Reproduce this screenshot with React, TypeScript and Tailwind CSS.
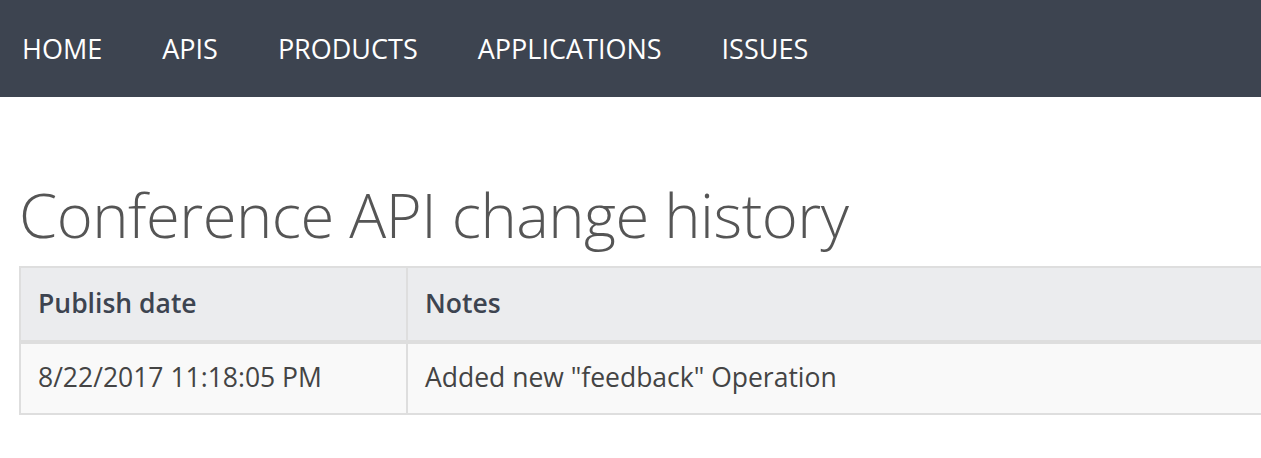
import React from "react";

export default function App() {
  const nav = ["HOME", "APIS", "PRODUCTS", "APPLICATIONS", "ISSUES"];
  return (
    <div className="min-h-[458px] w-[1261px] overflow-hidden bg-white" style={{ fontFamily: '"Open Sans", "Noto Sans", sans-serif' }}>
      <nav className="flex h-[97px] items-center bg-[#3d4450] pl-[22px]">
        <ul className="flex gap-[60px]">
          {nav.map((n) => (
            <li key={n} className="text-[27px] leading-none text-white">{n}</li>
          ))}
        </ul>
      </nav>
      <main className="pl-[19px] pt-[87px]">
        <h1 className="text-[61.5px] font-light leading-none tracking-[-0.5px] text-[#555555]">Conference API change history</h1>
        <table className="mt-[20px] w-[1300px] border-collapse border-2 border-[#dedede] text-[26.5px]">
          <thead>
            <tr className="bg-[#ebecee] text-[#3d4450]">
              <th className="h-[75px] w-[387px] border-2 border-b-[4px] border-[#dedede] px-[17px] text-left font-semibold">Publish date</th>
              <th className="h-[75px] border-2 border-b-[4px] border-[#dedede] px-[17px] text-left font-semibold">Notes</th>
            </tr>
          </thead>
          <tbody>
            <tr className="bg-[#f9f9f9] text-[#444444]">
              <td className="h-[72px] border-2 border-[#dedede] px-[17px]">8/22/2017 11:18:05 PM</td>
              <td className="h-[72px] border-2 border-[#dedede] px-[17px]">Added new "feedback" Operation</td>
            </tr>
          </tbody>
        </table>
      </main>
    </div>
  );
}
